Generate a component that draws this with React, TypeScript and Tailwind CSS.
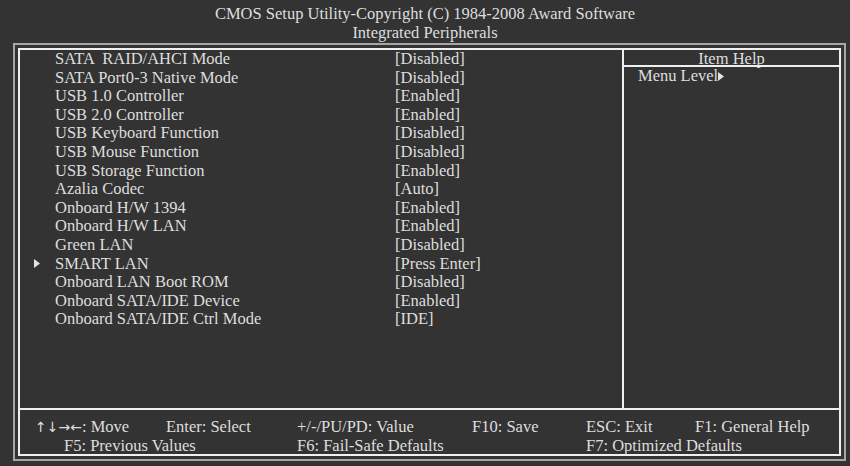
import React from "react";

const rows: [string, string, boolean?][] = [
  ["SATA  RAID/AHCI Mode", "[Disabled]"],
  ["SATA Port0-3 Native Mode", "[Disabled]"],
  ["USB 1.0 Controller", "[Enabled]"],
  ["USB 2.0 Controller", "[Enabled]"],
  ["USB Keyboard Function", "[Disabled]"],
  ["USB Mouse Function", "[Disabled]"],
  ["USB Storage Function", "[Enabled]"],
  ["Azalia Codec", "[Auto]"],
  ["Onboard H/W 1394", "[Enabled]"],
  ["Onboard H/W LAN", "[Enabled]"],
  ["Green LAN", "[Disabled]"],
  ["SMART LAN", "[Press Enter]", true],
  ["Onboard LAN Boot ROM", "[Disabled]"],
  ["Onboard SATA/IDE Device", "[Enabled]"],
  ["Onboard SATA/IDE Ctrl Mode", "[IDE]"],
];

function Tri({ w, h }: { w: number; h: number }) {
  return (
    <svg width={w} height={h} viewBox={`0 0 ${w} ${h}`} className="inline-block">
      <polygon points={`0,0 ${w},${h / 2} 0,${h}`} fill="#e4e4e4" />
    </svg>
  );
}

export default function App() {
  return (
    <div
      className="w-[850px] h-[466px] bg-[#333333] text-[#dedede] text-[16.5px] overflow-hidden"
      style={{ fontFamily: '"Liberation Serif", "Times New Roman", serif' }}
    >
      <div className="h-[43px] pt-[4px] text-center leading-[19px]">
        <div>CMOS Setup Utility-Copyright (C) 1984-2008 Award Software</div>
        <div>Integrated Peripherals</div>
      </div>
      <div className="ml-[13px] w-[833px] h-[418px] border-2 border-[#a6a6a6] p-[3px]">
        <div className="h-full border-2 border-[#f0f0f0] flex flex-col">
          <div className="h-[358px] flex">
            <div className="w-[604px] border-r-2 border-[#f0f0f0] leading-[18.6px]">
              {rows.map(([label, value, arrow]) => (
                <div key={label} className="flex h-[18.6px] whitespace-pre">
                  <div className="w-[35px] flex items-center pl-[14px]">
                    {arrow ? <Tri w={6} h={9} /> : null}
                  </div>
                  <div className="w-[340px]">{label}</div>
                  <div>{value}</div>
                </div>
              ))}
            </div>
            <div className="flex-1 flex flex-col">
              <div className="h-[15px] leading-[18px] text-center">Item Help</div>
              <div className="h-[2px] bg-[#f0f0f0]" />
              <div className="leading-[18.6px] pl-[14px] flex items-center">
                <span>Menu Level</span>
                <Tri w={6} h={9} />
              </div>
            </div>
          </div>
          <div className="flex-1 border-t-2 border-[#f0f0f0] pt-[8px] pl-[15px] leading-[17.5px]">
            <div className="grid grid-cols-[131px_131px_175px_114px_109px_1fr] whitespace-pre">
              <div>
                <span className="text-[14px]" style={{ fontFamily: '"DejaVu Sans", sans-serif' }}>
                  ↑↓→←
                </span>
                : Move
              </div>
              <div>Enter: Select</div>
              <div>+/-/PU/PD: Value</div>
              <div>F10: Save</div>
              <div>ESC: Exit</div>
              <div>F1: General Help</div>
              <div className="col-span-2 pl-[29px]">F5: Previous Values</div>
              <div className="col-span-2">F6: Fail-Safe Defaults</div>
              <div className="col-span-2">F7: Optimized Defaults</div>
            </div>
          </div>
        </div>
      </div>
    </div>
  );
}
